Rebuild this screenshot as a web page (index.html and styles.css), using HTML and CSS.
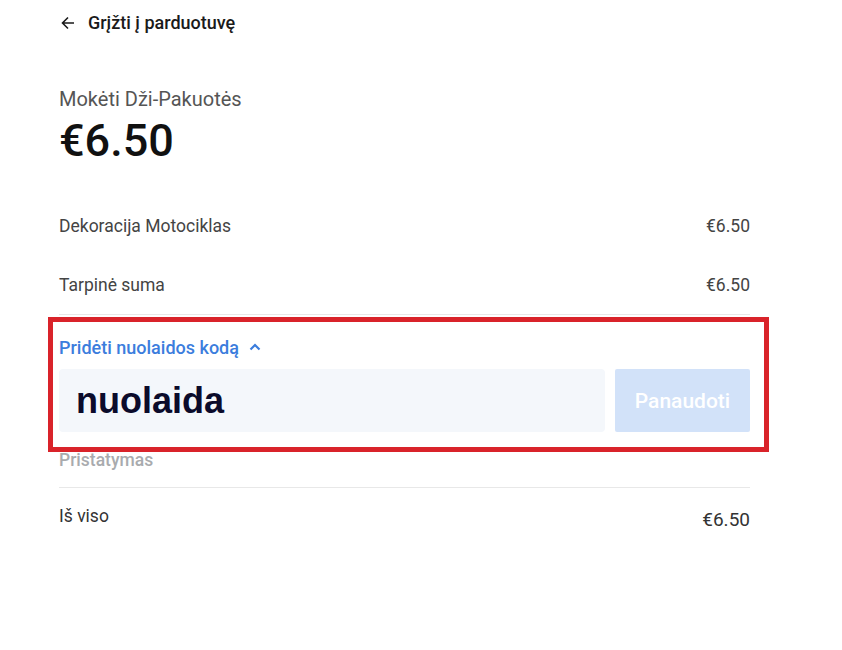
FILE: index.html
```html
<!DOCTYPE html>
<html lang="lt">
<head>
  <meta charset="UTF-8" />
  <meta name="viewport" content="width=device-width, initial-scale=1" />
  <title>Mokėti Dži-Pakuotės</title>
  <link rel="stylesheet" href="styles.css">
</head>
<body>
  <!-- Grįžimo nuoroda -->
  <a class="back" href="#">
    <svg class="back-arrow" width="14" height="14" viewBox="0 0 14 14" fill="none">
      <path d="M13 7H1.5M7 1.5 1.5 7 7 12.5" stroke="currentColor" stroke-width="1.6"/>
    </svg>
    <span>Grįžti į parduotuvę</span>
  </a>

  <!-- Suvestinė -->
  <div class="summary">
    <div class="pay-title">Mokėti Dži-Pakuotės</div>
    <div class="pay-amount">€6.50</div>

    <div class="line">
      <span>Dekoracija Motociklas</span>
      <span>€6.50</span>
    </div>

    <div class="line subtotal">
      <span>Tarpinė suma</span>
      <span>€6.50</span>
    </div>

    <!-- Nuolaidos kodas (pažymėtas raudonu rėmeliu) -->
    <div class="promo">
      <div class="promo-toggle">
        <span>Pridėti nuolaidos kodą</span>
        <svg width="12" height="8" viewBox="0 0 12 8" fill="none">
          <path d="M1.5 6.5 6 2l4.5 4.5" stroke="currentColor" stroke-width="2.2"/>
        </svg>
      </div>
      <div class="promo-row">
        <div class="promo-input">nuolaida</div>
        <button class="promo-btn">Panaudoti</button>
      </div>
    </div>

    <div class="line shipping">
      <span>Pristatymas</span>
    </div>

    <div class="line total">
      <span>Iš viso</span>
      <span class="total-sum">€6.50</span>
    </div>
  </div>
</body>
</html>
```

FILE: styles.css
```css
/* === ZÁKLAD === */
body {
  margin: 0;
  font-family: Roboto, "Noto Sans", sans-serif;
  color: #1a1a1a;
  background: #fff;
}

/* === ZPĚT === */
.back {
  display: flex;
  align-items: center;
  gap: 13px;
  height: 44px;
  padding-left: 61px;
  color: #1a1a1a;
  text-decoration: none;
  font-size: 18px;
  font-weight: 500;
}

.back-arrow {
  margin-top: 1px;
}

/* === SOUHRN === */
.summary {
  width: 691px;
  margin-left: 59px;
  padding-top: 43px;
}

.pay-title {
  font-size: 20px;
  color: #555;
  line-height: 24px;
}

.pay-amount {
  font-size: 45px;
  font-weight: 500;
  color: #111;
  line-height: 52px;
  margin-top: 4px;
}

.line {
  display: flex;
  justify-content: space-between;
  align-items: center;
  font-size: 17.5px;
  color: #444;
  height: 59px;
}

.pay-amount + .line {
  margin-top: 29px;
}

.subtotal {
  border-bottom: 1px solid #e8e8e8;
  height: 59px;
}

/* === NUOLAIDA === */
.promo {
  position: relative;
  padding-top: 21px;
}

.promo::before {
  content: "";
  position: absolute;
  left: -11px;
  right: -19px;
  top: 2px;
  bottom: -20px;
  border: 5px solid #d9232a;
  pointer-events: none;
}

.promo-toggle {
  display: flex;
  align-items: center;
  gap: 10px;
  color: #3b7ddd;
  font-size: 18px;
  font-weight: 500;
  height: 22px;
}

.promo-row {
  display: flex;
  gap: 10px;
  margin-top: 11px;
}

.promo-input {
  flex: 1;
  height: 63px;
  background: #f4f7fb;
  border-radius: 4px;
  padding-left: 17px;
  display: flex;
  align-items: center;
  font-family: "Liberation Sans", Arial, sans-serif;
  font-size: 36px;
  font-weight: bold;
  color: #0b0b2b;
}

.promo-btn {
  width: 135px;
  height: 63px;
  border: 0;
  border-radius: 2px;
  background: #d2e2f9;
  color: #fff;
  font-family: Roboto, sans-serif;
  font-size: 21px;
  font-weight: 500;
}

.shipping {
  color: #a9abae;
  font-weight: 500;
  height: 55px;
  border-bottom: 1px solid #e8e8e8;
}

.total {
  color: #333;
  height: 56px;
}

.total-sum {
  font-size: 19px;
  color: #333;
  margin-top: 6px;
}
```
